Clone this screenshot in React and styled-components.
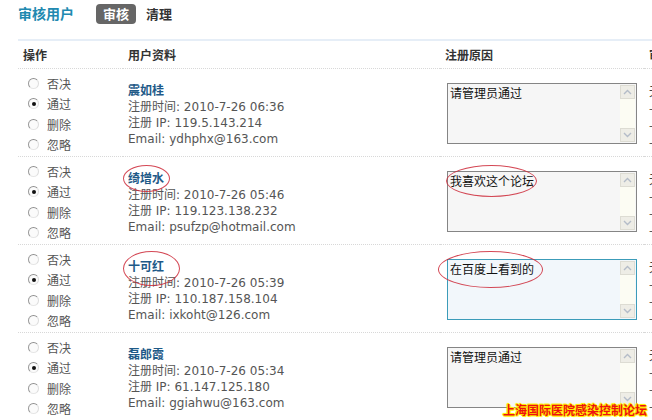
import React from "react";
import styled, { createGlobalStyle } from "styled-components";

const GlobalStyle = createGlobalStyle`
	html, body {
		margin: 0;
		padding: 0;
		background: #ffffff;
		overflow: hidden;
	}
	body {
		font-family: "DejaVu Sans", "Noto Sans CJK SC", sans-serif;
		font-size: 12px;
		color: #555555;
	}
`;

const users = [
	{
		name: "震如桂",
		time: "2010-7-26 06:36",
		ip: "119.5.143.214",
		email: "ydhphx@163.com",
		reason: "请管理员通过",
	},
	{
		name: "绮增水",
		time: "2010-7-26 05:46",
		ip: "119.123.138.232",
		email: "psufzp@hotmail.com",
		reason: "我喜欢这个论坛",
		nameMark: { left: -5, top: -5, width: 47, height: 27 },
		reasonMark: { left: -2, top: -7, width: 91, height: 32 },
	},
	{
		name: "十可红",
		time: "2010-7-26 05:39",
		ip: "110.187.158.104",
		email: "ixkoht@126.com",
		reason: "在百度上看到的",
		focused: true,
		nameMark: { left: -5, top: -7, width: 57, height: 35 },
		reasonMark: { left: -10, top: -9, width: 105, height: 37 },
	},
	{
		name: "磊郎霞",
		time: "2010-7-26 05:34",
		ip: "61.147.125.180",
		email: "ggiahwu@163.com",
		reason: "请管理员通过",
	},
];

const actions = ["否决", "通过", "删除", "忽略"];

function Chevron({ down }) {
	return (
		<svg width="9" height="6" viewBox="0 0 9 6">
			<polyline
				points={down ? "1,1 4.5,4.5 8,1" : "1,5 4.5,1.5 8,5"}
				fill="none"
				stroke="#b4bcc8"
				strokeWidth="1.4"
			/>
		</svg>
	);
}

export default function App() {
	return (
		<Page>
			<GlobalStyle />
			<TopBar>
				<Title>审核用户</Title>
				<Tab active>审核</Tab>
				<Tab>清理</Tab>
			</TopBar>

			<Table>
				<HeadCell>操作</HeadCell>
				<HeadCell>用户资料</HeadCell>
				<HeadCell>注册原因</HeadCell>
				<HeadCell>审核记录</HeadCell>

				{users.map((u) => (
					<React.Fragment key={u.email}>
						<ActionCell>
							{actions.map((a) => (
								<RadioLine key={a}>
									<Radio checked={a === "通过"} />
									<span>{a}</span>
								</RadioLine>
							))}
						</ActionCell>
						<InfoCell>
							<Name>
								{u.name}
								{u.nameMark && <Mark {...u.nameMark} />}
							</Name>
							<div>注册时间: {u.time}</div>
							<div>注册 IP: {u.ip}</div>
							<div>Email: {u.email}</div>
						</InfoCell>
						<ReasonCell>
							<TextBox focused={u.focused}>
								<BoxText>{u.reason}</BoxText>
								<ScrollBar>
									<ScrollButton>
										<Chevron />
									</ScrollButton>
									<ScrollButton>
										<Chevron down />
									</ScrollButton>
								</ScrollBar>
								{u.reasonMark && <Mark {...u.reasonMark} />}
							</TextBox>
						</ReasonCell>
						<LogCell>
							<div>无</div>
							<div>-</div>
							<div>-</div>
							<div>-</div>
						</LogCell>
					</React.Fragment>
				))}
			</Table>

			<Watermark>上海国际医院感染控制论坛</Watermark>
		</Page>
	);
}

const Page = styled.div`
	position: relative;
	width: 652px;
	height: 420px;
	overflow: hidden;
	padding-left: 18px;
	box-sizing: border-box;
`;

const TopBar = styled.div`
	height: 39px;
	padding-top: 4px;
	box-sizing: border-box;
	display: flex;
	align-items: flex-start;
`;

const Title = styled.div`
	font-family: "Noto Sans CJK SC", sans-serif;
	font-size: 14px;
	font-weight: bold;
	line-height: 18px;
	color: #2189b0;
	margin-right: 22px;
`;

const Tab = styled.div`
	font-family: "Noto Sans CJK SC", sans-serif;
	font-size: 13px;
	font-weight: bold;
	height: 20px;
	line-height: 20px;
	padding: 0 7px;
	margin-right: 3px;
	border-radius: 4px;
	background: ${(p) => (p.active ? "#666666" : "transparent")};
	color: ${(p) => (p.active ? "#ffffff" : "#333333")};
`;

const Table = styled.div`
	width: 800px;
	border-top: 2px solid #e6eef7;
	display: grid;
	grid-template-columns: 105px 317px 204px 174px;
	grid-auto-rows: 88px;
	grid-template-rows: 27px;
`;

const HeadCell = styled.div`
	font-family: "Noto Sans CJK SC", sans-serif;
	font-weight: bold;
	color: #333333;
	line-height: 27px;
	height: 27px;
	padding-left: 5px;
	border-bottom: 1px dotted #d8d8d8;
`;

const Cell = styled.div`
	border-bottom: 1px dotted #d8d8d8;
	box-sizing: content-box;
	height: 88px;
`;

const ActionCell = styled(Cell)`
	padding: 5px 0 0 10px;
	height: 83px;
`;

const RadioLine = styled.div`
	display: flex;
	align-items: center;
	height: 20.5px;
	gap: 8px;
	font-family: "Noto Sans CJK SC", sans-serif;
	color: #555555;
`;

const Radio = styled.span`
	position: relative;
	width: 11px;
	height: 11px;
	box-sizing: border-box;
	border-radius: 50%;
	border: 1px solid;
	border-color: #8f8f8f #dcdcdc #e6e6e6 #9a9a9a;
	background: #fbfbfb;

	&::after {
		content: "";
		display: ${(p) => (p.checked ? "block" : "none")};
		position: absolute;
		left: 2.5px;
		top: 2.5px;
		width: 4px;
		height: 4px;
		border-radius: 50%;
		background: #111111;
	}
`;

const InfoCell = styled(Cell)`
	padding: 14px 0 0 5px;
	height: 74px;
	line-height: 16px;
	color: #555555;
`;

const Name = styled.div`
	position: relative;
	display: inline-block;
	font-family: "Noto Sans CJK SC", sans-serif;
	font-weight: bold;
	color: #1e5a88;
`;

const ReasonCell = styled(Cell)`
	padding: 15px 0 0 7px;
	height: 73px;
`;

const TextBox = styled.div`
	position: relative;
	width: 190px;
	height: 61px;
	box-sizing: border-box;
	border: 1px solid ${(p) => (p.focused ? "#3c9cb9" : "#858585")};
	background: ${(p) => (p.focused ? "#f2f7fb" : "#f6f6f6")};
	display: flex;
`;

const BoxText = styled.div`
	flex: 1;
	padding: 2px 0 0 2px;
	font-family: "Noto Sans CJK SC", sans-serif;
	font-size: 12px;
	line-height: 14px;
	color: #111111;
`;

const ScrollBar = styled.div`
	width: 15px;
	margin: 1px 1px 1px 0;
	background: #fcfcf3;
	display: flex;
	flex-direction: column;
	justify-content: space-between;
`;

const ScrollButton = styled.div`
	height: 14px;
	box-sizing: border-box;
	border: 1px solid #dddcd3;
	background: #eeede6;
	display: flex;
	align-items: center;
	justify-content: center;
`;

const LogCell = styled(Cell)`
	padding: 14px 0 0 5px;
	height: 74px;
	line-height: 17px;
	font-family: "Noto Sans CJK SC", sans-serif;
	color: #444444;
`;

const Mark = styled.span`
	position: absolute;
	left: ${(p) => p.left}px;
	top: ${(p) => p.top}px;
	width: ${(p) => p.width}px;
	height: ${(p) => p.height}px;
	box-sizing: border-box;
	border: 1.5px solid rgba(205, 40, 55, 0.85);
	border-radius: 50%;
	pointer-events: none;
`;

const Watermark = styled.div`
	position: absolute;
	right: 5px;
	bottom: 2px;
	font-family: "Noto Sans CJK SC", sans-serif;
	font-size: 12px;
	font-weight: bold;
	line-height: 16px;
	color: #ee1111;
	text-shadow: 1px 0 0 #ffee00, -1px 0 0 #ffee00, 0 1px 0 #ffee00,
		0 -1px 0 #ffee00, 1px 1px 1px #ffee00, -1px -1px 1px #ffee00;
`;
